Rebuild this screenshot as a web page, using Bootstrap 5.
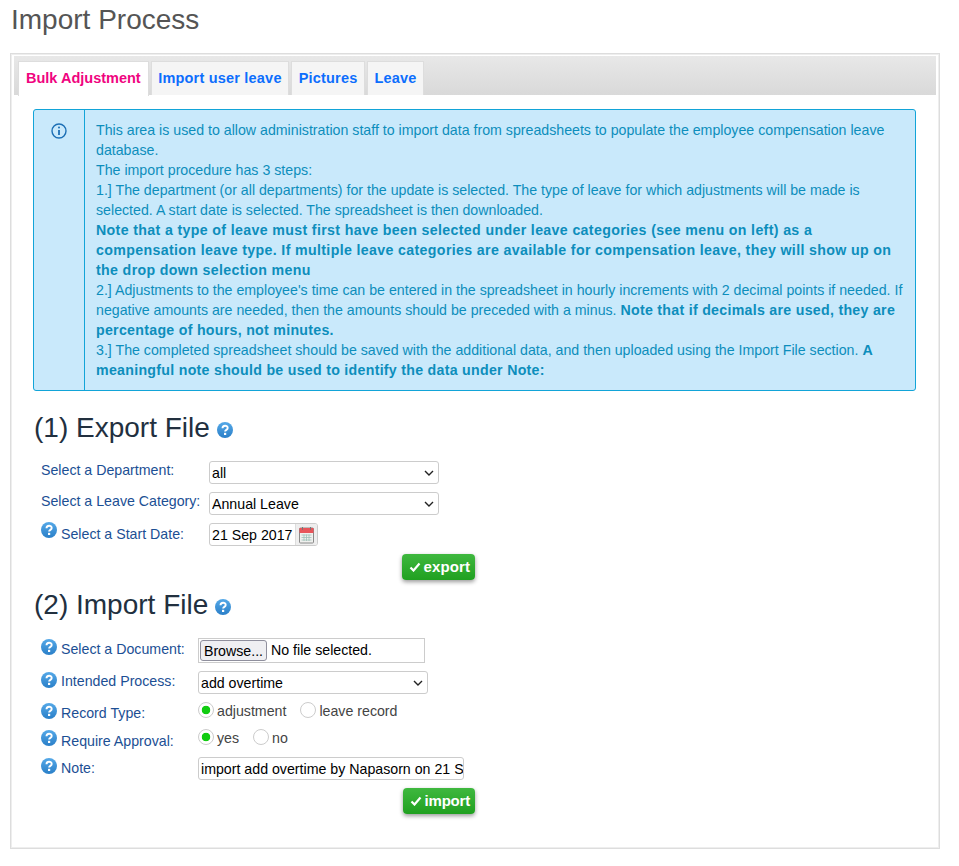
<!DOCTYPE html>
<html lang="en"><head><meta charset="utf-8"><title>Import Process</title>
<link href="https://cdn.jsdelivr.net/npm/bootstrap@5.3.0/dist/css/bootstrap.min.css" rel="stylesheet">
<style>
html,body{height:100%;overflow:hidden}
body{font-family:"Liberation Sans",Arial,sans-serif;font-size:14.2px;color:#222;background:#fff;padding:0 19px 0 10px}
.page-title{font-size:28px;font-weight:400;color:#555;line-height:32px;margin:4px 0 17px 1px}
.outer{border:1px solid #ddd;box-shadow:inset 0 0 0 1px #eee;padding:2px 3px 3px;height:796px}
.tabbar{background:linear-gradient(#e8e8e8,#d9d9d9);height:39px;padding:5px 0 0 4px;gap:2px;list-style:none;margin:0}
.tabbar a{display:block;height:34px;line-height:33px;padding:0 6.500px;background:#f5f5f5;border:1px solid #ddd;border-bottom:0;font-weight:700;font-size:14.5px;color:#0d6efd;text-decoration:none;letter-spacing:.2px}
.tabbar a.on{background:#fff;color:#f0047f;height:35px;letter-spacing:0;padding:0 7px}
.tabbody{padding:14px 19px 0 19px}
.notice{border:1px solid #12a4d8;border-radius:3px;background:#c9e9fb;color:#0d8ebc;line-height:20px;height:282px;margin-right:1px}
.notice-ic{width:51px;border-right:1px solid #12a4d8;padding-top:10px;text-align:center;flex:none}
.notice-tx{padding:10px 11px 0 11px}
.notice-tx b{letter-spacing:.28px}
.notice-tx b.wide{letter-spacing:.35px}
.sec-h{font-size:28px;font-weight:400;color:#22303f;line-height:32px;margin:0;padding-left:1px;display:flex;align-items:center}
.sec-h svg{margin-left:7px;margin-top:3px}
.frow{display:flex;color:#1c4f94;padding-left:8px}
.lab{display:flex;align-items:flex-start;gap:4px}
.lab svg{flex:none;margin-top:1px}
.lab-date svg{margin-top:-1px}
.lab-up{margin-top:-1px}
.lab-dn1{margin-top:1px}
.lab-dn2{margin-top:2px}
.fctl{height:23px;border:1px solid #ccc;border-radius:3px;background:#fff;color:#000;font-size:14.2px;font-family:inherit;padding:1px 0 0 2px}
select.fctl{appearance:none;padding:1px 14px 0 2px;background:#fff url("data:image/svg+xml,%3Csvg xmlns='http://www.w3.org/2000/svg' width='10' height='6'%3E%3Cpath d='M1 1l4 4 4-4' fill='none' stroke='%23222' stroke-width='1.400'/%3E%3C/svg%3E") no-repeat right 4px center}
.lab1{width:168px}
.lab2{width:157px}
.w230{width:230px}
.w266{width:266px}
.dategrp{display:flex;height:23px;border:1px solid #ccc;border-radius:3px;color:#000;padding-left:2px;line-height:22px;width:109px;justify-content:space-between;overflow:hidden}
.calbox{width:22px;background:#eee;border-left:1px solid #ddd;display:flex;align-items:center;justify-content:center}
.btnrow{padding-right:442px;margin-top:8px}
.gbtn{background:linear-gradient(#3fb83f,#20a020);border:0;border-radius:4px;color:#fff;font-weight:700;font-size:15px;height:26px;padding:0 5px 0 7px;box-shadow:0 2px 4px rgba(0,0,0,.4);display:flex;align-items:center;gap:3px;letter-spacing:.1px}
.gbtn.imp{letter-spacing:-.2px}
.filebox{border:1px solid #ccc;width:227px;height:25px;display:flex;align-items:center;color:#000;padding-left:1px;gap:4px}
.filebtn{width:67px;height:21px;background:#efeff2;border:1px solid #8f8f9d;border-radius:3px;font-size:14.2px;color:#000;padding:0;line-height:18px}
.rad{width:16px;height:16px;border-radius:50%;border:1px solid #ccc;background:#fff;flex:none;appearance:none;margin:0}
.rad:checked{background:radial-gradient(circle,#11cc11 0 4px,#fff 4.600px)}
.radgrp{display:flex;align-items:center;color:#444;gap:3px;height:16px}
.radgrp span{margin-top:3px}
.radset{display:flex;gap:14px}
.rec-row{height:27px}
.app-row{height:28px}
.h2a{margin-top:21px;margin-bottom:17px}
.h2b{margin-top:9px;margin-bottom:17px}
.defs{position:absolute;width:0;height:0}
.mb8{margin-bottom:8px}
</style></head>
<body>
<svg class="defs"><defs><linearGradient id="qg" x1="0" y1="0" x2="0" y2="1"><stop offset="0" stop-color="#55a9e8"/><stop offset="1" stop-color="#2a7fc8"/></linearGradient><symbol id="q" viewBox="0 0 16 16"><circle cx="8" cy="8" r="8" fill="url(#qg)"/><path d="M5.500 6.200c0-3.200 5.200-3.200 5.200-.2 0 1.900-2.600 1.800-2.600 3.600" fill="none" stroke="#fff" stroke-width="1.900"/><rect x="7" y="10.800" width="2.200" height="2.200" fill="#fff"/></symbol></defs></svg>
<h1 class="page-title">Import Process</h1>
<div class="outer">
<ul class="tabbar d-flex">
<li><a class="on" href="#">Bulk Adjustment</a></li>
<li><a href="#">Import user leave</a></li>
<li><a href="#">Pictures</a></li>
<li><a href="#">Leave</a></li>
</ul>
<div class="tabbody">
<div class="notice d-flex">
<div class="notice-ic"><svg width="16" height="16" viewBox="0 0 16 16" fill="none" stroke="#1c6fb5"><circle cx="8" cy="8" r="7" stroke-width="1.400"/><path d="M8 7v5" stroke-width="1.800"/><circle cx="8" cy="4.600" r="1" fill="#1c6fb5" stroke="none"/></svg></div>
<div class="notice-tx">This area is used to allow administration staff to import data from spreadsheets to populate the employee compensation leave database.<br>The import procedure has 3 steps:<br>1.] The department (or all departments) for the update is selected. The type of leave for which adjustments will be made is selected. A start date is selected. The spreadsheet is then downloaded.<br><b class="wide">Note that a type of leave must first have been selected under leave categories (see menu on left) as a compensation leave type. If multiple leave categories are available for compensation leave, they will show up on the drop down selection menu</b><br>2.] Adjustments to the employee's time can be entered in the spreadsheet in hourly increments with 2 decimal points if needed. If negative amounts are needed, then the amounts should be preceded with a minus. <b>Note that if decimals are used, they are percentage of hours, not minutes.</b><br>3.] The completed spreadsheet should be saved with the additional data, and then uploaded using the Import File section. <b>A meaningful note should be used to identify the data under Note:</b></div>
</div>

<h2 class="sec-h h2a">(1) Export File <svg width="16" height="16"><use href="#q"/></svg></h2>
<div class="frow mb8"><div class="lab lab1"><span class="lab-up">Select a Department:</span></div><select class="fctl w230"><option>all</option></select></div>
<div class="frow mb8"><div class="lab lab1"><span class="lab-up">Select a Leave Category:</span></div><select class="fctl w230"><option>Annual Leave</option></select></div>
<div class="frow"><div class="lab lab1 lab-date"><svg width="16" height="16"><use href="#q"/></svg><span class="lab-dn1">Select a Start Date:</span></div><div class="dategrp"><span>21 Sep 2017</span><span class="calbox"><svg width="17" height="18" viewBox="0 0 16 18"><rect x="1" y="2" width="14" height="15" rx="1" fill="#f0f0ee" stroke="#8a8a8a"/><rect x="1" y="2" width="14" height="5" fill="#e8555a"/><path d="M4 1v3M12 1v3" stroke="#777"/><path d="M3 9h10M3 11.500h10M3 14h10M5.500 8.500v6.500M8 8.500v6.500M10.500 8.500v6.500" stroke="#9fc0b8" stroke-width=".8"/></svg></span></div></div>
<div class="d-flex justify-content-end btnrow"><button class="gbtn" type="button"><svg width="12" height="10" viewBox="0 0 11 10"><path d="M1 5.500l3 3 6-7" fill="none" stroke="#fff" stroke-width="2.200"/></svg>export</button></div>

<h2 class="sec-h h2b">(2) Import File <svg width="16" height="16"><use href="#q"/></svg></h2>
<div class="frow mb8"><div class="lab lab2"><svg width="16" height="16"><use href="#q"/></svg><span class="lab-dn1">Select a Document:</span></div><div class="filebox"><button class="filebtn" type="button">Browse...</button><span>No file selected.</span></div></div>
<div class="frow mb8"><div class="lab lab2"><svg width="16" height="16"><use href="#q"/></svg>Intended Process:</div><select class="fctl w230"><option>add overtime</option></select></div>
<div class="frow rec-row"><div class="lab lab2"><svg width="16" height="16"><use href="#q"/></svg><span class="lab-dn1">Record Type:</span></div><div class="radset"><label class="radgrp"><input class="rad" type="radio" name="a" checked><span>adjustment</span></label><label class="radgrp"><input class="rad" type="radio" name="a"><span>leave record</span></label></div></div>
<div class="frow app-row"><div class="lab lab2"><svg width="16" height="16"><use href="#q"/></svg><span class="lab-dn2">Require Approval:</span></div><div class="radset"><label class="radgrp"><input class="rad" type="radio" name="b" checked><span>yes</span></label><label class="radgrp"><input class="rad" type="radio" name="b"><span>no</span></label></div></div>
<div class="frow"><div class="lab lab2"><svg width="16" height="16"><use href="#q"/></svg><span class="lab-dn1">Note:</span></div><input class="fctl w266" value="import add overtime by Napasorn on 21 Sep 2017"></div>
<div class="d-flex justify-content-end btnrow"><button class="gbtn imp" type="button"><svg width="12" height="10" viewBox="0 0 11 10"><path d="M1 5.500l3 3 6-7" fill="none" stroke="#fff" stroke-width="2.200"/></svg>import</button></div>
</div>
</div>
<script src="https://cdn.jsdelivr.net/npm/bootstrap@5.3.0/dist/js/bootstrap.bundle.min.js"></script>
</body></html>
